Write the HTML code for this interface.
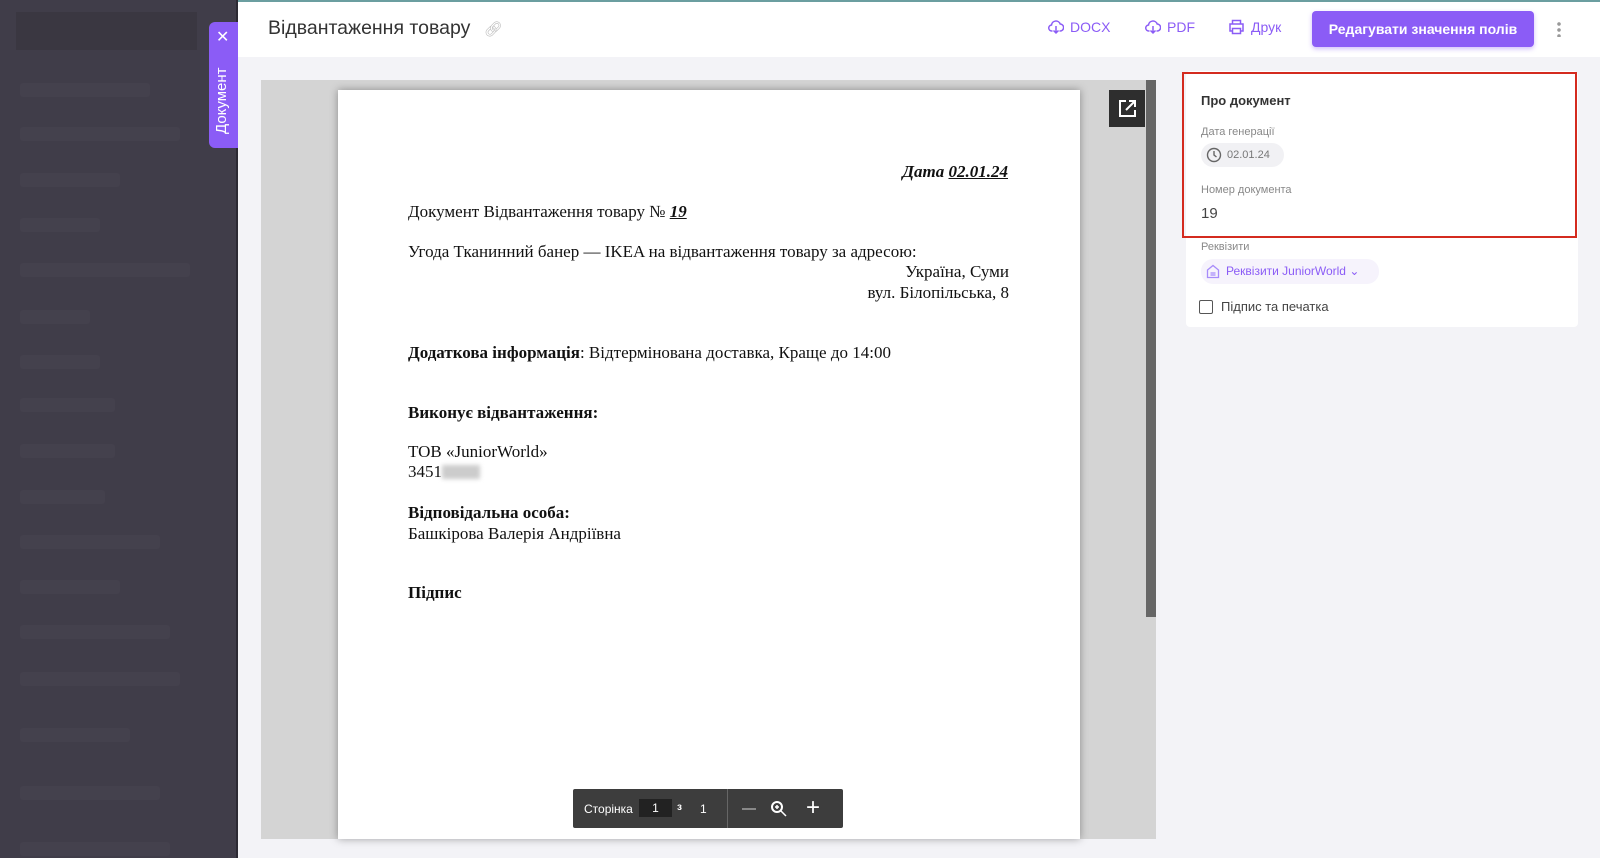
<!DOCTYPE html>
<html><head><meta charset="utf-8"><style>
*{box-sizing:border-box;margin:0;padding:0}
body{width:1600px;height:858px;overflow:hidden;background:#f3f3f7;font-family:"Liberation Sans",sans-serif;position:relative}
.sb{position:absolute;left:0;top:0;width:238px;height:858px;background:#403d49;border-right:2px solid #2c2a33}
.sb .it{position:absolute;left:20px;height:14px;background:#44414d;border-radius:3px}
.top{position:absolute;left:238px;top:0;right:0;height:57px;background:#fff;border-top:2px solid #6b9ea0}
.title{position:absolute;left:268px;top:17px;font-size:19.5px;color:#333}
.act{position:absolute;top:19px;font-size:14px;color:#8b5cf6;display:flex;align-items:center;gap:6px}
.btn{position:absolute;left:1312px;top:11px;width:222px;height:36px;background:#8b5cf6;color:#fff;border-radius:4px;font-size:14px;font-weight:bold;text-align:center;line-height:36px;box-shadow:0 2px 5px rgba(139,92,246,.4)}
.tab{position:absolute;left:209px;top:22px;width:29px;height:126px;background:#8b5cf6;border-radius:6px 0 0 6px;color:#fff}
.tab span{position:absolute;left:4px;top:112px;transform:rotate(-90deg);transform-origin:0 0;font-size:15px;white-space:nowrap;width:90px}
.viewer{position:absolute;left:261px;top:80px;width:895px;height:759px;background:#d4d4d4}
.page{position:absolute;left:338px;top:90px;width:742px;height:749px;background:#fff;box-shadow:0 0 8px rgba(0,0,0,.35);font-family:"Liberation Serif",serif;font-size:17px;color:#111}
.page div{position:absolute;white-space:nowrap}
.scr{position:absolute;left:1146px;top:80px;width:10px;height:537px;background:#666}
.exp{position:absolute;left:1109px;top:90px;width:36px;height:37px;background:#2e2e2e}
.tb{position:absolute;left:573px;top:789px;width:270px;height:39px;background:#3d3d3d;border-radius:2px;color:#fff;font-size:12px}
.card{position:absolute;left:1186px;top:71px;width:392px;height:256px;background:#fff;border-radius:4px}
.red{position:absolute;left:1182px;top:72px;width:395px;height:166px;border:2px solid #d42b1f}
.lbl{position:absolute;font-size:11px;color:#888}
</style></head><body>
<div class="sb">
<div style="position:absolute;left:16px;top:12px;width:181px;height:38px;background:#3a3741"></div>
<div class="it" style="top:83px;width:130px"></div>
<div class="it" style="top:127px;width:160px"></div>
<div class="it" style="top:173px;width:100px"></div>
<div class="it" style="top:218px;width:80px"></div>
<div class="it" style="top:263px;width:170px"></div>
<div class="it" style="top:310px;width:70px"></div>
<div class="it" style="top:355px;width:80px"></div>
<div class="it" style="top:398px;width:95px"></div>
<div class="it" style="top:444px;width:95px"></div>
<div class="it" style="top:490px;width:85px"></div>
<div class="it" style="top:535px;width:140px"></div>
<div class="it" style="top:580px;width:100px"></div>
<div class="it" style="top:625px;width:150px"></div>
<div class="it" style="top:672px;width:160px"></div>
<div class="it" style="top:728px;width:110px"></div>
<div class="it" style="top:786px;width:140px"></div>
<div class="it" style="top:842px;width:150px"></div>
</div>
<div class="top"></div>
<div class="title">Відвантаження товару <span style="color:#bbb;font-size:15px;margin-left:8px">🔗︎</span></div>
<div class="act" style="left:1048px"><svg width="16" height="16" viewBox="0 0 16 16" fill="none" stroke="#8b5cf6" stroke-width="1.5"><path d="M4.5 12H4a3 3 0 0 1-.5-6 4.5 4.5 0 0 1 8.7-1A3.5 3.5 0 0 1 12 12h-.5M8 7v7M5.5 11.5 8 14l2.5-2.5"/></svg>DOCX</div>
<div class="act" style="left:1145px"><svg width="16" height="16" viewBox="0 0 16 16" fill="none" stroke="#8b5cf6" stroke-width="1.5"><path d="M4.5 12H4a3 3 0 0 1-.5-6 4.5 4.5 0 0 1 8.7-1A3.5 3.5 0 0 1 12 12h-.5M8 7v7M5.5 11.5 8 14l2.5-2.5"/></svg>PDF</div>
<div class="act" style="left:1228px"><svg width="17" height="16" viewBox="0 0 17 16" fill="none" stroke="#8b5cf6" stroke-width="1.5"><path d="M4.5 5V1.5h8V5M4.5 12H2V5h13v7h-2.5M4.5 9.5h8v5h-8z"/></svg>Друк</div>
<div class="btn">Редагувати значення полів</div>
<div style="position:absolute;left:1557px;top:21px;width:4px;height:16px;background:radial-gradient(circle,#999 1.6px,transparent 2px) 0 0/4px 6px"></div>
<div class="viewer"></div>
<div class="scr"></div>
<div class="page">
<div style="right:72px;top:72px;font-weight:bold;font-style:italic">Дата <u>02.01.24</u></div>
<div style="left:70px;top:112px">Документ Відвантаження товару № <b><i><u>19 </u></i></b></div>
<div style="left:70px;top:152px">Угода Тканинний банер — IKEA на відвантаження товару за адресою:</div>
<div style="right:71px;top:172px">Україна, Суми</div>
<div style="right:71px;top:193px">вул. Білопільська, 8</div>
<div style="left:70px;top:253px"><b>Додаткова інформація</b>: Відтермінована доставка, Краще до 14:00</div>
<div style="left:70px;top:313px;font-weight:bold">Виконує відвантаження:</div>
<div style="left:70px;top:352px">ТОВ «JuniorWorld»</div>
<div style="left:70px;top:372px">3451<span style="display:inline-block;width:38px;height:14px;background:#ccc;vertical-align:-2px;filter:blur(2px)"></span></div>
<div style="left:70px;top:413px;font-weight:bold">Відповідальна особа:</div>
<div style="left:70px;top:434px">Башкірова Валерія Андріївна</div>
<div style="left:70px;top:493px;font-weight:bold">Підпис</div>
</div>
<div class="exp"><svg width="36" height="37" viewBox="0 0 36 37" fill="none" stroke="#fff" stroke-width="2"><path d="M17 11h-6v15h15v-6M20 11h6v6M26 11l-9 9"/></svg></div>
<div class="tb">
<span style="position:absolute;left:11px;top:13px">Сторінка</span>
<span style="position:absolute;left:66px;top:10px;width:33px;height:18px;background:#222;text-align:center;line-height:18px">1</span>
<span style="position:absolute;left:104px;top:13px;font-size:10px;font-weight:bold">з</span>
<span style="position:absolute;left:127px;top:13px">1</span>
<span style="position:absolute;left:154px;top:0;width:1px;height:39px;background:#666"></span>
<span style="position:absolute;left:169px;top:19px;width:14px;height:2px;background:#888"></span>
<svg style="position:absolute;left:197px;top:11px" width="18" height="18" viewBox="0 0 18 18" fill="none" stroke="#fff" stroke-width="2"><circle cx="7" cy="7" r="5"/><path d="M11 11l5 5M5 7h4M7 5v4" stroke-width="1.5"/></svg>
<span style="position:absolute;left:233px;top:5px;font-size:24px;line-height:28px">+</span>
</div>
<div class="card"></div>
<div class="red"></div>
<div style="position:absolute;left:1201px;top:93px;font-size:13px;font-weight:bold;color:#333">Про документ</div>
<div class="lbl" style="left:1201px;top:126px">Дата генерації</div>
<div style="position:absolute;left:1201px;top:143px;width:83px;height:24px;background:#f1f1f4;border-radius:12px;font-size:11px;color:#777;line-height:24px;padding-left:26px">02.01.24<svg style="position:absolute;left:5px;top:4px" width="16" height="16" viewBox="0 0 16 16" fill="none" stroke="#666" stroke-width="1.4"><circle cx="8" cy="8" r="6.5"/><path d="M8 4v4l2.5 2"/></svg></div>
<div class="lbl" style="left:1201px;top:184px">Номер документа</div>
<div style="position:absolute;left:1201px;top:205px;font-size:15px;color:#444">19</div>
<div class="lbl" style="left:1201px;top:241px">Реквізити</div>
<div style="position:absolute;left:1201px;top:259px;width:178px;height:25px;background:#f6f3fc;border-radius:12px;font-size:12px;color:#8b5cf6;line-height:25px;padding-left:25px">Реквізити JuniorWorld ⌄<svg style="position:absolute;left:5px;top:5px" width="14" height="15" viewBox="0 0 14 15" fill="none" stroke="#a78bfa" stroke-width="1.3"><path d="M1.5 6 7 1.5 12.5 6v7.5h-11zM4.5 9h5M4.5 11h5"/></svg></div>
<div style="position:absolute;left:1199px;top:300px;width:14px;height:14px;border:1.5px solid #555;border-radius:2px"></div>
<div style="position:absolute;left:1221px;top:299px;font-size:13px;color:#444">Підпис та печатка</div>
<div class="tab"><span>Документ</span><div style="position:absolute;left:7px;top:5px;font-size:16px">✕</div></div>
</body></html>
